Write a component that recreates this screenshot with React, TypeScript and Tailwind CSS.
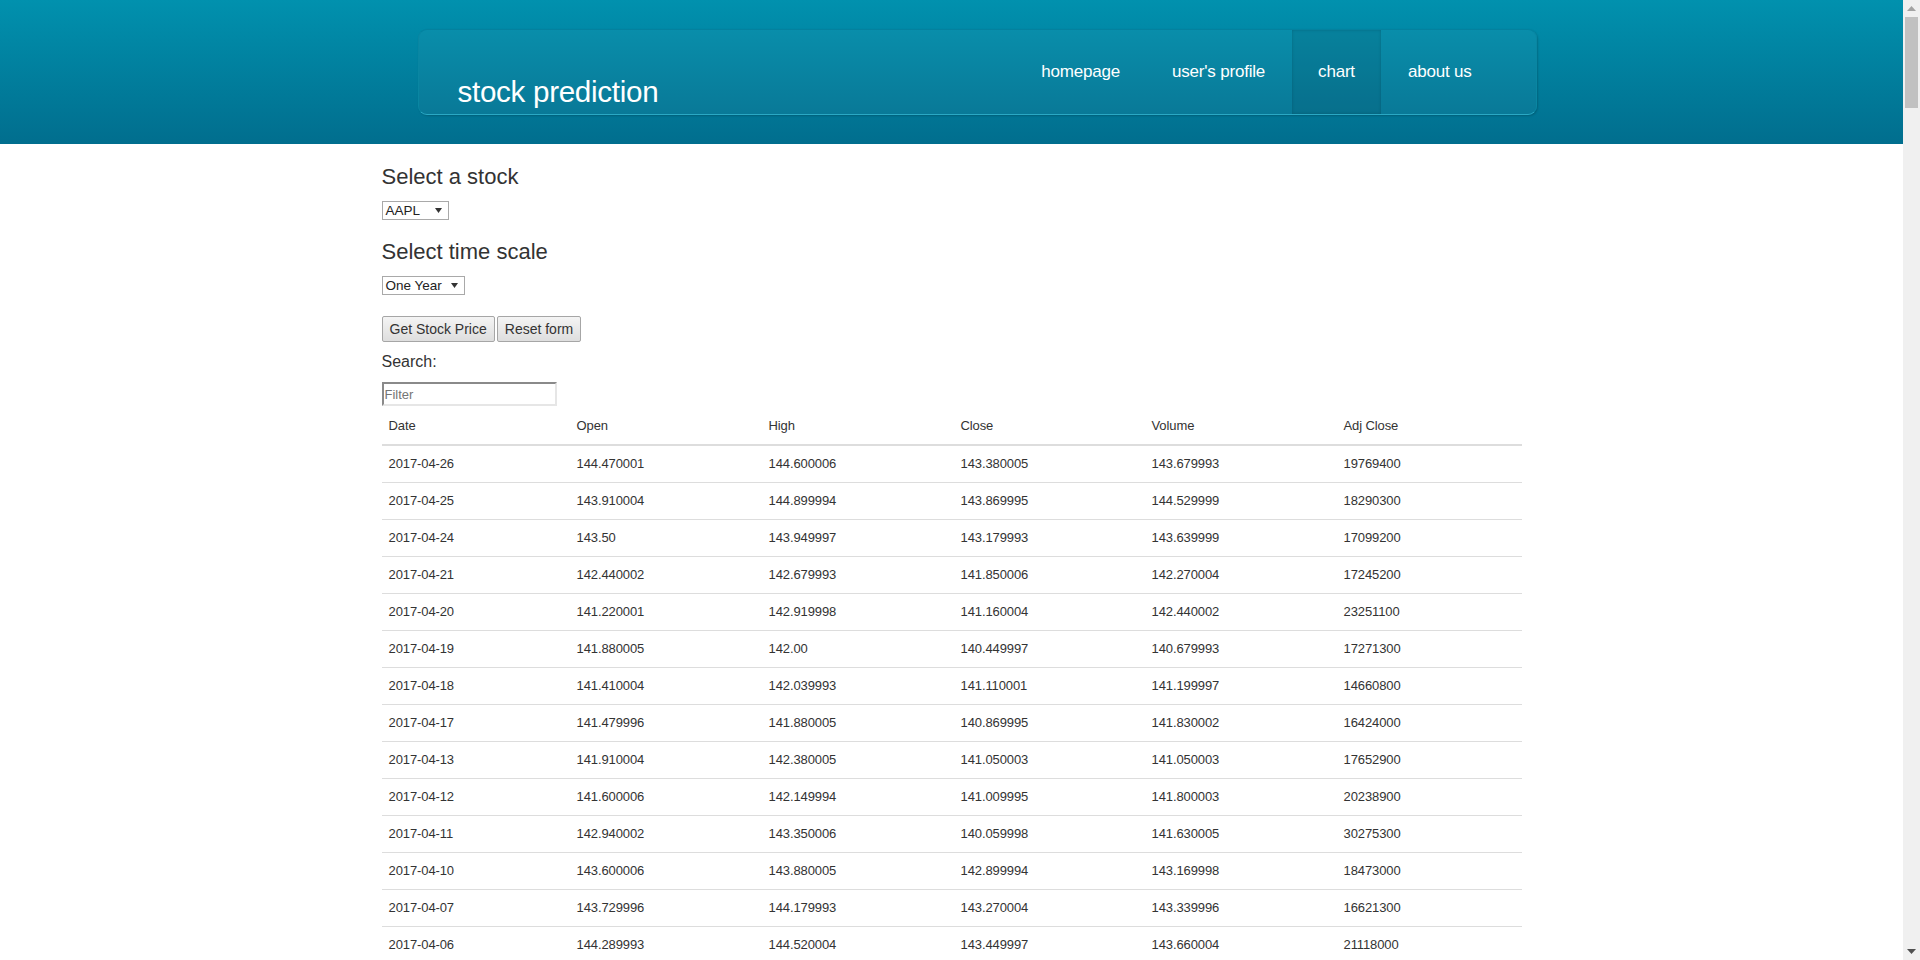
import React from "react";

const rows: string[][] = [
  ["2017-04-26", "144.470001", "144.600006", "143.380005", "143.679993", "19769400"],
  ["2017-04-25", "143.910004", "144.899994", "143.869995", "144.529999", "18290300"],
  ["2017-04-24", "143.50", "143.949997", "143.179993", "143.639999", "17099200"],
  ["2017-04-21", "142.440002", "142.679993", "141.850006", "142.270004", "17245200"],
  ["2017-04-20", "141.220001", "142.919998", "141.160004", "142.440002", "23251100"],
  ["2017-04-19", "141.880005", "142.00", "140.449997", "140.679993", "17271300"],
  ["2017-04-18", "141.410004", "142.039993", "141.110001", "141.199997", "14660800"],
  ["2017-04-17", "141.479996", "141.880005", "140.869995", "141.830002", "16424000"],
  ["2017-04-13", "141.910004", "142.380005", "141.050003", "141.050003", "17652900"],
  ["2017-04-12", "141.600006", "142.149994", "141.009995", "141.800003", "20238900"],
  ["2017-04-11", "142.940002", "143.350006", "140.059998", "141.630005", "30275300"],
  ["2017-04-10", "143.600006", "143.880005", "142.899994", "143.169998", "18473000"],
  ["2017-04-07", "143.729996", "144.179993", "143.270004", "143.339996", "16621300"],
  ["2017-04-06", "144.289993", "144.520004", "143.449997", "143.660004", "21118000"],
];

const headers = ["Date", "Open", "High", "Close", "Volume", "Adj Close"];
const colWidths = ["w-[188px]", "w-[192px]", "w-[192px]", "w-[191px]", "w-[192px]", "w-[185px]"];

function Caret() {
  return (
    <svg width="7" height="5" viewBox="0 0 7 5" className="shrink-0">
      <path d="M0 0 H7 L3.5 5 Z" fill="#333" />
    </svg>
  );
}

function FakeSelect({ label, width }: { label: string; width: string }) {
  return (
    <div
      className={`${width} h-[19px] flex items-center justify-between border border-[#a9a9a9] bg-white pl-[3px] pr-[6px] text-[13.5px] leading-none text-[#222]`}
    >
      <span>{label}</span>
      <Caret />
    </div>
  );
}

export default function App() {
  return (
    <div className="h-[960px] w-[1920px] overflow-hidden flex bg-white font-['Liberation_Sans',Arial,sans-serif] text-[#333]">
      <div className="flex-1 min-w-0 overflow-hidden flex flex-col">
        {/* Header */}
        <header className="h-[144px] shrink-0 bg-gradient-to-b from-[#0191ae] to-[#016e8e] pt-[29px]">
          <div className="w-[1170px] mx-auto flex">
            <div className="ml-[51px] flex-1 h-[86px] flex justify-between rounded-[9px] border border-t-[#04819e] border-x-[#0a86a2] border-b-[#2aa8c4] bg-[rgba(255,255,255,0.035)] shadow-[1px_1px_2px_rgba(0,0,0,0.18)]">
              <div className="flex items-end pl-[39px] pb-[8px]">
                <span className="text-[29.6px] leading-[29px] text-white tracking-[-0.3px]">stock prediction</span>
              </div>
              <nav className="flex items-stretch mr-[38px] text-white text-[17px] tracking-[-0.2px]">
                <a className="flex items-center px-[26px]">homepage</a>
                <a className="flex items-center px-[26px]">user's profile</a>
                <a className="flex items-center px-[26px] ml-[1px] bg-[rgba(0,40,60,0.12)] shadow-[inset_0_0_3px_rgba(0,0,0,0.18)]">chart</a>
                <a className="flex items-center px-[26px] ml-[1px]">about us</a>
              </nav>
            </div>
          </div>
        </header>

        {/* Body */}
        <main className="w-[1140px] mx-auto flex flex-col items-start">
          <h3 className="mt-[21px] text-[22px] leading-[24px] text-[#333]">Select a stock</h3>
          <div className="mt-[12px]">
            <FakeSelect label="AAPL" width="w-[67px]" />
          </div>
          <h3 className="mt-[20px] text-[22px] leading-[24px] text-[#333]">Select time scale</h3>
          <div className="mt-[12px]">
            <FakeSelect label="One Year" width="w-[83px]" />
          </div>
          <div className="mt-[21px] flex gap-[2px]">
            <button className="h-[26px] px-[7px] border border-[#a6a6a6] rounded-[2px] bg-gradient-to-b from-[#f4f4f4] to-[#dedede] text-[14px] text-[#333] leading-none">
              Get Stock Price
            </button>
            <button className="h-[26px] px-[7px] border border-[#a6a6a6] rounded-[2px] bg-gradient-to-b from-[#f4f4f4] to-[#dedede] text-[14px] text-[#333] leading-none">
              Reset form
            </button>
          </div>
          <div className="mt-[10px] text-[16px] leading-[20px] text-[#333]">Search:</div>
          <input
            placeholder="Filter"
            className="mt-[10px] w-[175px] h-[24px] border-2 border-t-[#8a8a8a] border-l-[#8a8a8a] border-b-[#e6e6e6] border-r-[#e6e6e6] px-[1px] text-[13px] text-[#333] placeholder:text-[#757575] outline-none"
          />
          <table className="mt-[1px] w-[1140px] table-fixed border-collapse text-[13px] tracking-[-0.1px] text-[#333]">
            <colgroup>
              {colWidths.map((w, i) => (
                <col key={i} className={w} />
              ))}
            </colgroup>
            <thead>
              <tr>
                {headers.map((h) => (
                  <th key={h} className="text-left font-normal px-[7px] py-[8px] leading-[21px] border-b-2 border-[#dddddd]">
                    {h}
                  </th>
                ))}
              </tr>
            </thead>
            <tbody>
              {rows.map((r) => (
                <tr key={r[0]}>
                  {r.map((c, i) => (
                    <td key={i} className="px-[7px] py-[8px] leading-[20px] border-t border-[#dddddd]">
                      {c}
                    </td>
                  ))}
                </tr>
              ))}
            </tbody>
          </table>
        </main>
      </div>

      {/* Scrollbar */}
      <div className="w-[17px] shrink-0 h-full bg-[#f0f0f0] flex flex-col items-center">
        <div className="h-[17px] flex items-center justify-center">
          <svg width="9" height="5" viewBox="0 0 9 5">
            <path d="M0 5 L4.5 0 L9 5 Z" fill="#a3a3a3" />
          </svg>
        </div>
        <div className="w-[13px] h-[91px] bg-[#c1c1c1]" />
        <div className="flex-1" />
        <div className="h-[17px] flex items-center justify-center">
          <svg width="9" height="5" viewBox="0 0 9 5">
            <path d="M0 0 L9 0 L4.5 5 Z" fill="#505050" />
          </svg>
        </div>
      </div>
    </div>
  );
}
